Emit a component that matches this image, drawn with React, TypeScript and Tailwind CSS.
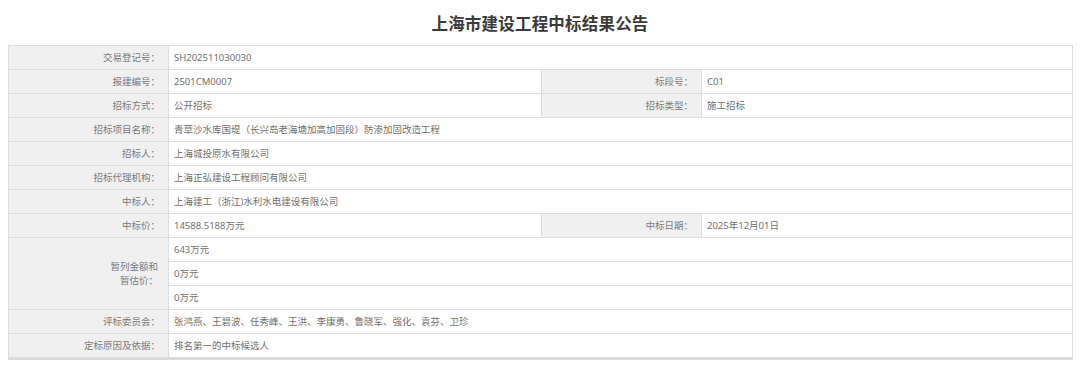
import React from 'react';

const labelCls =
  'w-[160px] bg-[#f0f0f0] border border-[#dedede] text-right pr-[8px] pl-[6px] text-[#7a7a7a] align-middle';
const valueCls = 'border border-[#dedede] pl-[5px] text-[#707070] align-middle';

type Row = { label: string; value: string; label2?: string; value2?: string };

const topRows: Row[] = [
  { label: '交易登记号：', value: 'SH202511030030' },
  { label: '报建编号：', value: '2501CM0007', label2: '标段号：', value2: 'C01' },
  { label: '招标方式：', value: '公开招标', label2: '招标类型：', value2: '施工招标' },
  { label: '招标项目名称：', value: '青草沙水库国堤（长兴岛老海塘加高加固段）防渗加固改造工程' },
  { label: '招标人：', value: '上海城投原水有限公司' },
  { label: '招标代理机构：', value: '上海正弘建设工程顾问有限公司' },
  { label: '中标人：', value: '上海建工（浙江)水利水电建设有限公司' },
  { label: '中标价：', value: '14588.5188万元', label2: '中标日期：', value2: '2025年12月01日' },
];

const bottomRows: Row[] = [
  { label: '评标委员会：', value: '张鸿燕、王碧波、任秀峰、王洪、李康勇、鲁晓军、强化、袁芬、卫珍' },
  { label: '定标原因及依据：', value: '排名第一的中标候选人' },
];

function InfoRow({ row }: { row: Row }) {
  return (
    <tr className="h-[24px]">
      <td className={labelCls}>{row.label}</td>
      {row.label2 ? (
        <>
          <td className={`${valueCls} w-[373px]`}>{row.value}</td>
          <td className={labelCls}>{row.label2}</td>
          <td className={valueCls}>{row.value2}</td>
        </>
      ) : (
        <td className={valueCls} colSpan={3}>
          {row.value}
        </td>
      )}
    </tr>
  );
}

export default function App() {
  return (
    <div
      className="w-[1080px] h-[366px] bg-white overflow-hidden"
      style={{ fontFamily: '"Noto Sans", "Noto Sans CJK SC", sans-serif' }}
    >
      {/* Title */}
      <div className="h-[45px] pt-[13px] text-center">
        <h1 className="text-[16.5px] leading-[22px] font-bold text-[#3a3a3a] tracking-[0.2px]">
          上海市建设工程中标结果公告
        </h1>
      </div>

      {/* Result table */}
      <div className="ml-[8px] w-[1065px] border-b-2 border-[#dadada]">
        <table className="w-full border-collapse table-fixed text-[9.5px] leading-[12px]">
          <colgroup>
            <col className="w-[160px]" />
            <col className="w-[373px]" />
            <col className="w-[160px]" />
            <col />
          </colgroup>
          <tbody>
            {topRows.map((row) => (
              <InfoRow key={row.label} row={row} />
            ))}
            <tr className="h-[24px]">
              <td className={labelCls} rowSpan={3}>
                <div className="leading-[14px] pr-[2px]">
                  暂列金额和
                  <br />
                  暂估价：
                </div>
              </td>
              <td className={valueCls} colSpan={3}>
                643万元
              </td>
            </tr>
            <tr className="h-[24px]">
              <td className={valueCls} colSpan={3}>
                0万元
              </td>
            </tr>
            <tr className="h-[24px]">
              <td className={valueCls} colSpan={3}>
                0万元
              </td>
            </tr>
            {bottomRows.map((row) => (
              <InfoRow key={row.label} row={row} />
            ))}
          </tbody>
        </table>
      </div>
    </div>
  );
}
